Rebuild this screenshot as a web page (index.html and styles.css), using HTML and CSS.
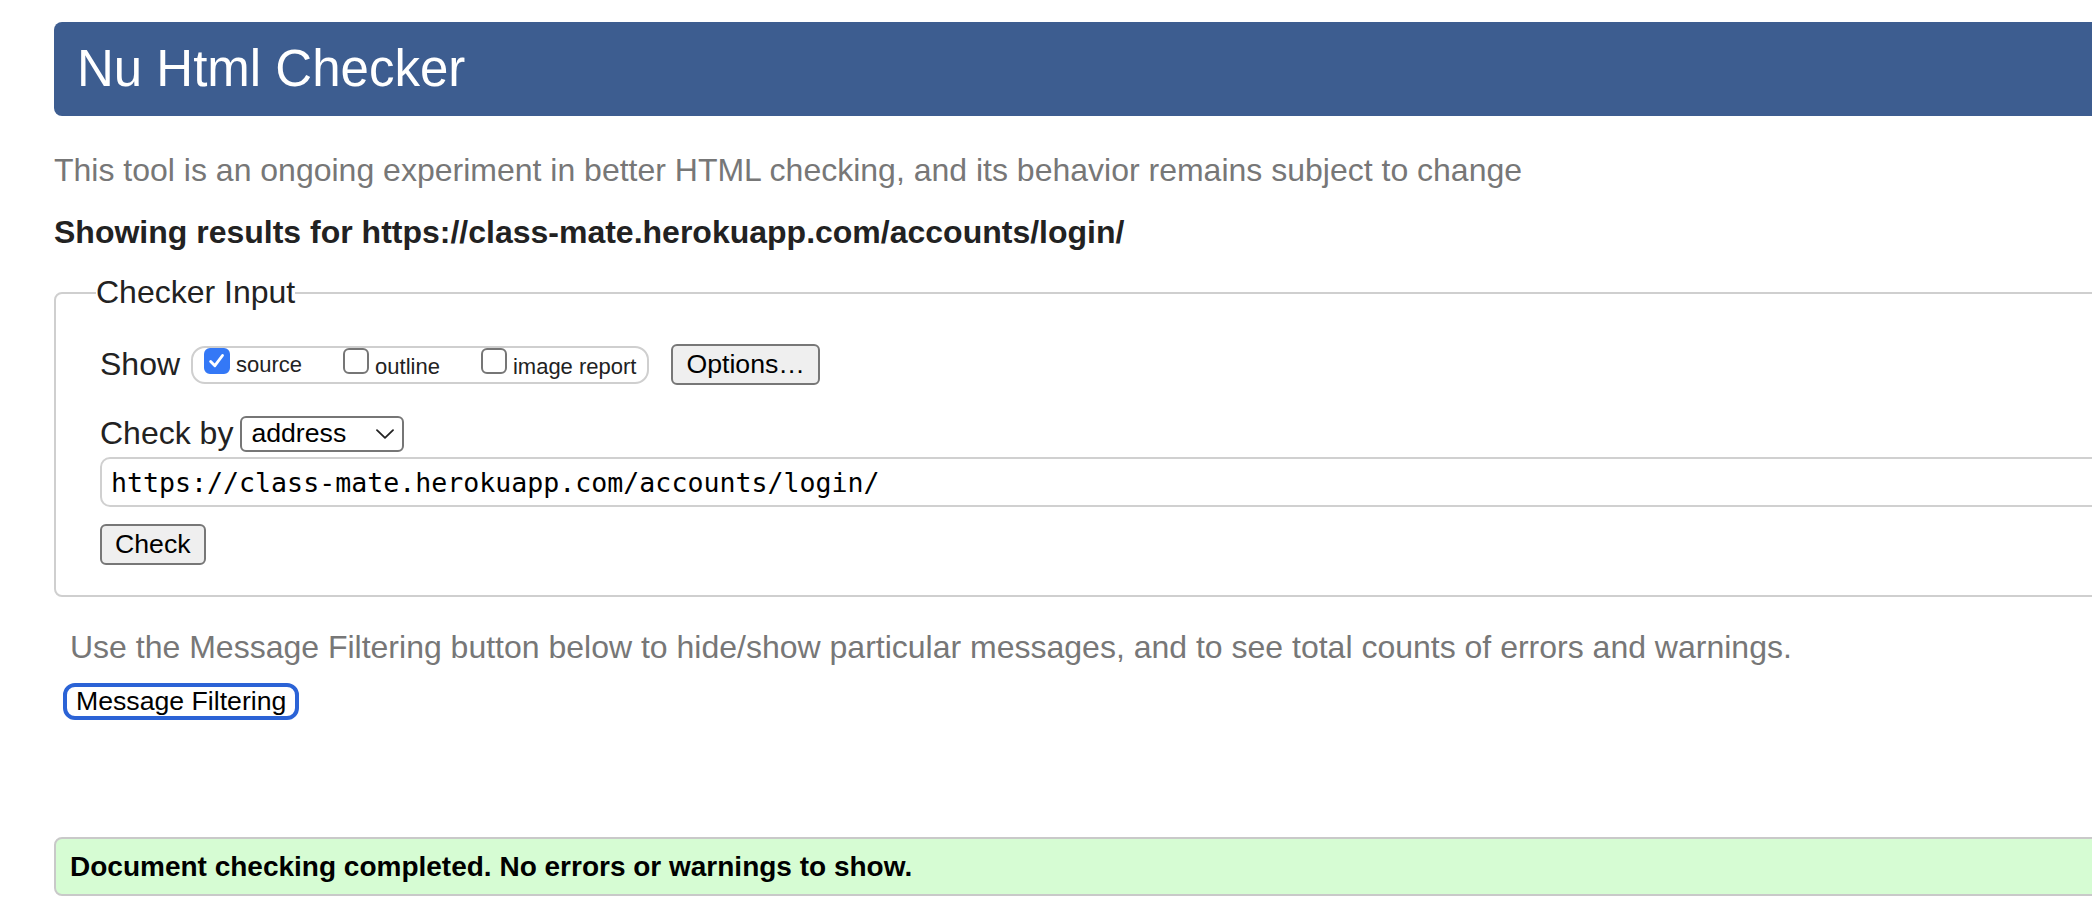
FILE: index.html
```html
<!DOCTYPE html>
<html lang="en">
<head>
<meta charset="utf-8">
<title>Nu Html Checker</title>
<link rel="stylesheet" href="styles.css">
</head>
<body>
<div class="page">
  <h1 class="masthead">Nu Html Checker</h1>
  <p class="tagline">This tool is an ongoing experiment in better HTML checking, and its behavior remains subject to change</p>
  <p class="results-for">Showing results for https://class-mate.herokuapp.com/accounts/login/</p>
  <form class="checker-form">
    <fieldset class="checker-input">
      <legend class="legend">Checker Input</legend>
      <div class="row row-show">
        <span class="label label-show">Show</span>
        <div class="show-group">
          <label class="opt"><span class="cb cb-on"><svg class="tick" viewBox="0 0 26 26" width="22" height="22"><path d="M5.5 13.5 L10.5 18.5 L19.5 6.5" fill="none" stroke="#fff" stroke-width="3.4" stroke-linecap="round" stroke-linejoin="round"/></svg></span><span class="opt-text">source</span></label>
          <label class="opt"><span class="cb"></span><span class="opt-text">outline</span></label>
          <label class="opt"><span class="cb"></span><span class="opt-text">image report</span></label>
        </div>
        <button type="button" class="btn btn-options">Options…</button>
      </div>
      <div class="row row-by">
        <span class="label">Check by</span>
        <div class="select"><span class="select-value">address</span><svg class="chev" viewBox="0 0 18 10" width="18" height="10"><path d="M1 1.2 L9 8.8 L17 1.2" fill="none" stroke="#222" stroke-width="1.8" stroke-linecap="round" stroke-linejoin="round"/></svg></div>
      </div>
      <input class="url-input" type="url" value="https://class-mate.herokuapp.com/accounts/login/">
      <button type="button" class="btn btn-check">Check</button>
    </fieldset>
  </form>
  <p class="filter-hint">Use the Message Filtering button below to hide/show particular messages, and to see total counts of errors and warnings.</p>
  <button type="button" class="btn-filter">Message Filtering</button>
  <p class="success">Document checking completed. No errors or warnings to show.</p>
</div>
</body>
</html>
```
FILE: styles.css
```css
html, body {
  margin: 0;
  padding: 0;
  background: #fff;
  overflow: hidden;
}

body {
  font-family: "Liberation Sans", Arial, Helvetica, sans-serif;
  color: #222;
}

.page {
  width: 2400px;
  padding: 22px 0 0 54px;
}

.masthead {
  margin: 0;
  height: 94px;
  line-height: 94px;
  padding-left: 23px;
  background: #3d5d90;
  color: #fff;
  font-size: 51px;
  font-weight: normal;
  border-radius: 8px;
}

.tagline {
  margin: 36px 0 0;
  font-size: 32px;
  line-height: 37px;
  color: #777;
}

.results-for {
  margin: 25px 0 0;
  font-size: 32px;
  line-height: 37px;
  font-weight: bold;
  color: #222;
}

.checker-form {
  margin: 23px 0 0;
}

.checker-input {
  margin: 0;
  min-width: 0;
  border: 2px solid #cfcfcf;
  border-radius: 8px;
  padding: 33px 0 30px 44px;
}

.legend {
  padding: 0;
  margin-left: -4px;
  font-size: 32px;
  line-height: 37px;
  color: #222;
}

.row {
  display: flex;
  align-items: center;
}

.row-show {
  height: 41px;
}

.label {
  font-size: 32px;
  line-height: 37px;
  color: #222;
}

.label-show {
  margin-right: 11px;
}

.show-group {
  box-sizing: border-box;
  height: 38px;
  border: 2px solid #cfcfcf;
  border-radius: 14px;
  padding: 0 11px;
  display: flex;
  align-items: flex-start;
  gap: 41px;
}

.opt {
  display: flex;
  align-items: baseline;
  gap: 6px;
  font-size: 22px;
  color: #222;
}

.cb {
  box-sizing: border-box;
  width: 26px;
  height: 26px;
  border: 2px solid #767676;
  border-radius: 6px;
  background: #fff;
  display: flex;
  align-items: center;
  justify-content: center;
}

.cb-on {
  background: #3478f6;
  border-color: #3478f6;
}

.tick {
  display: block;
}

.btn {
  box-sizing: border-box;
  height: 41px;
  padding: 0 13px;
  border: 2px solid #777;
  border-radius: 6px;
  background: #efefef;
  color: #000;
  font-family: "Liberation Sans", Arial, Helvetica, sans-serif;
  font-size: 26.67px;
  line-height: 1;
}

.btn-options {
  margin-left: 22px;
}

.row-by {
  margin-top: 30px;
  gap: 7px;
}

.select {
  box-sizing: border-box;
  width: 164px;
  height: 36px;
  border: 2px solid #767676;
  border-radius: 6px;
  background: #fff;
  padding: 0 8px 0 9px;
  display: flex;
  align-items: center;
  justify-content: space-between;
  font-size: 26.67px;
  color: #000;
}

.chev {
  display: block;
}

.url-input {
  display: block;
  box-sizing: border-box;
  margin-top: 5px;
  width: 100%;
  height: 50px;
  border: 2px solid #d0d0d0;
  border-radius: 10px;
  padding: 0 9px;
  font-family: "DejaVu Sans Mono", "Liberation Mono", monospace;
  font-size: 26.6px;
  color: #000;
  background: #fff;
  outline: none;
}

.btn-check {
  display: block;
  margin-top: 17px;
}

.filter-hint {
  margin: 32px 0 0 16px;
  font-size: 32px;
  line-height: 37px;
  color: #777;
}

.btn-filter {
  display: block;
  box-sizing: border-box;
  margin: 17px 0 0 9px;
  height: 37px;
  padding: 0 9px;
  border: 4px solid #2b63d6;
  border-radius: 12px;
  background: #fff;
  color: #000;
  font-family: "Liberation Sans", Arial, Helvetica, sans-serif;
  font-size: 26.67px;
  line-height: 1;
}

.success {
  box-sizing: border-box;
  margin: 117px 0 0;
  height: 59px;
  border: 2px solid #c9c9c9;
  border-radius: 8px;
  background: #d6fcd3;
  padding: 0 14px;
  font-size: 28px;
  line-height: 55px;
  font-weight: bold;
  color: #000;
}
```
